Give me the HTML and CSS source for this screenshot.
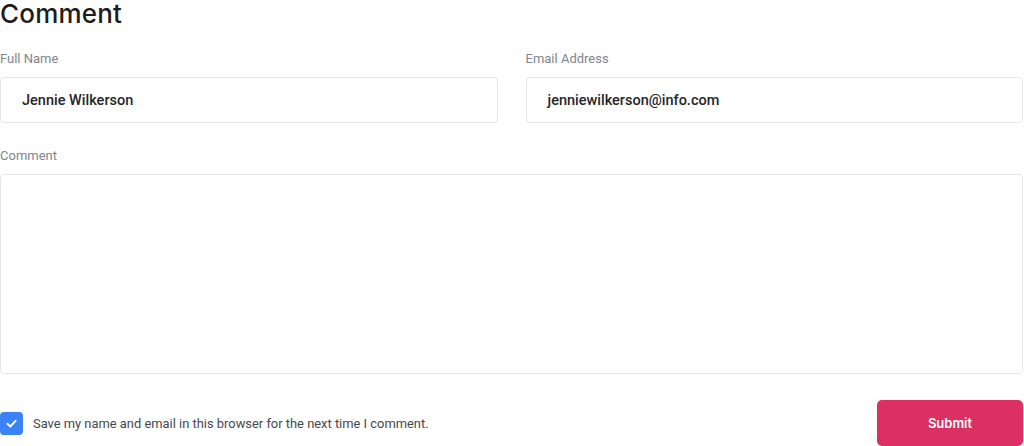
FILE: index.html
```html
<!DOCTYPE html>
<html>
<head>
<meta charset="utf-8">
<link rel="stylesheet" href="styles.css">
</head>
<body>
<form class="comment-form">
  <h2 class="title">Comment</h2>
  <div class="row">
    <div class="field">
      <label class="label">Full Name</label>
      <div class="input">Jennie Wilkerson</div>
    </div>
    <div class="field">
      <label class="label">Email Address</label>
      <div class="input">jenniewilkerson@info.com</div>
    </div>
  </div>
  <div class="field full">
    <label class="label">Comment</label>
    <div class="textarea"></div>
  </div>
  <div class="footer">
    <label class="check">
      <span class="box"><svg width="13" height="13" viewBox="0 0 12 12"><path d="M2.3 6.3 L4.9 8.8 L9.8 3.5" fill="none" stroke="#fff" stroke-width="1.8" stroke-linecap="round" stroke-linejoin="round"/></svg></span>
      <span class="check-text">Save my name and email in this browser for the next time I comment.</span>
    </label>
    <button type="button" class="submit">Submit</button>
  </div>
</form>
</body>
</html>
```
FILE: styles.css
```css
* { box-sizing: border-box; }
html, body { margin: 0; padding: 0; background: #fff; }
body { font-family: Roboto, "Liberation Sans", sans-serif; }
.comment-form { width: 1023px; display: flex; flex-direction: column; }
.title {
  margin: 0;
  font-family: Inter, "Liberation Sans", sans-serif;
  font-weight: 500;
  font-size: 26px;
  line-height: 27px;
  color: #1c1d21;
  letter-spacing: 0.2px;
}
.row { display: flex; gap: 28px; margin-top: 24px; }
.row .field { flex: 1; }
.label {
  display: block;
  font-size: 13px;
  line-height: 16px;
  color: #80858c;
  margin-bottom: 10px;
}
.input {
  height: 46px;
  border: 1px solid #e3e6ea;
  border-radius: 4px;
  padding-left: 21px;
  display: flex;
  align-items: center;
  font-size: 14.5px;
  font-weight: 500;
  color: #24262b;
}
.full { margin-top: 25px; }
.textarea {
  height: 200px;
  border: 1px solid #e3e6ea;
  border-radius: 4px;
}
.footer {
  display: flex;
  justify-content: space-between;
  align-items: center;
  margin-top: 26px;
}
.check { display: flex; align-items: center; gap: 10px; }
.box {
  width: 23px; height: 23px;
  background: #3b82f6;
  border-radius: 4px;
  display: flex; align-items: center; justify-content: center;
}
.check-text { font-size: 12.9px; color: #45484e; }
.submit {
  width: 146px; height: 46px;
  border: 0;
  border-radius: 5px;
  background: #dc3063;
  color: #fff;
  font-family: Inter, "Liberation Sans", sans-serif;
  font-weight: 600;
  font-size: 13px;
}
```
